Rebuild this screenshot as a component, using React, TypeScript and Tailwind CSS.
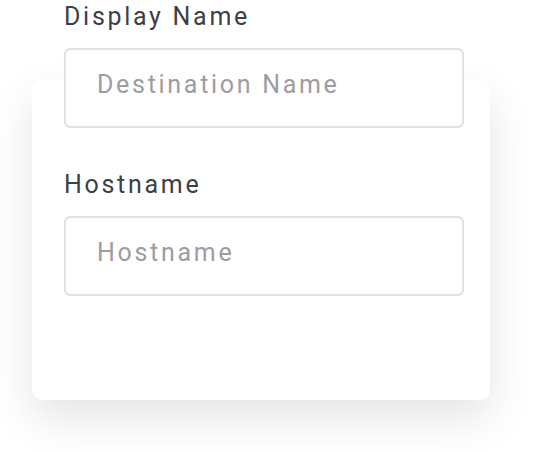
import React from "react";

function Field({ label, placeholder, className }: { label: string; placeholder: string; className?: string }) {
  return (
    <div className={className}>
      <label className="block text-[25px] leading-[34px] tracking-[2.7px] text-[#3b3f46]">{label}</label>
      <input
        readOnly
        placeholder={placeholder}
        className="mt-[14px] block h-[80px] w-[400px] rounded-[6px] border-2 border-[#e1e1e6] bg-white pb-[8px] pl-[31px] text-[25px] tracking-[2.7px] text-[#3b3f46] outline-none placeholder:text-[#9c9ca2]"
      />
    </div>
  );
}

export default function App() {
  return (
    <div className="h-[452px] w-[534px] bg-white pl-[32px] pt-[80px]" style={{ fontFamily: "Roboto, 'Noto Sans', sans-serif" }}>
      <div className="flex h-[320px] w-[458px] flex-col rounded-[10px] bg-white shadow-[0_18px_45px_rgba(0,0,0,0.11)]">
        <div className="-mt-[80px] flex flex-col px-[32px]">
          <Field label="Display Name" placeholder="Destination Name" />
          <Field label="Hostname" placeholder="Hostname" className="mt-[40px]" />
        </div>
      </div>
    </div>
  );
}
